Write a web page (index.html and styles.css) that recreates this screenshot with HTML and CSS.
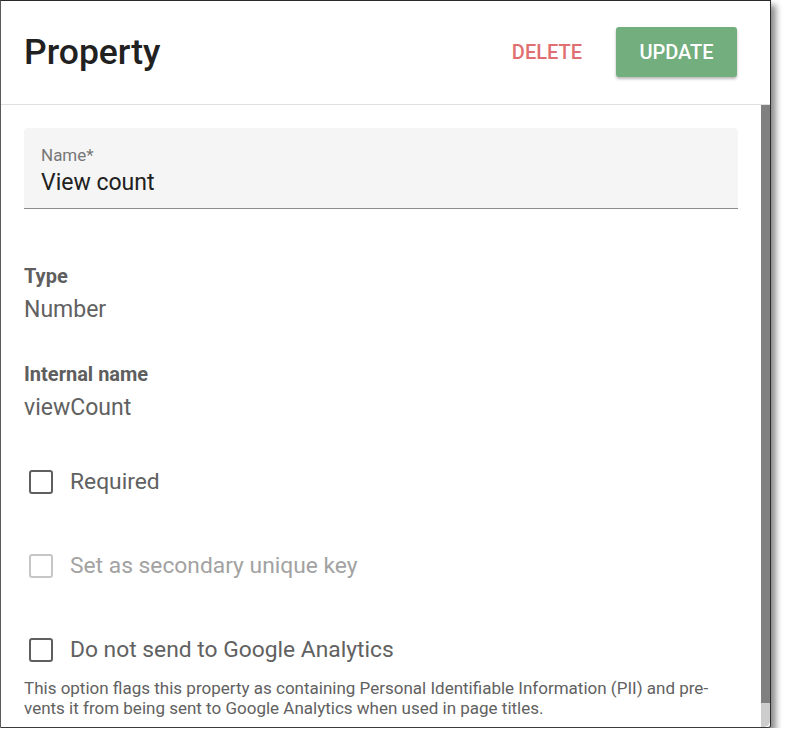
FILE: index.html
```html
<!DOCTYPE html>
<html lang="en">
<head>
<meta charset="utf-8">
<title>Property</title>
<link rel="stylesheet" href="styles.css">
</head>
<body>
<div class="dialog">
  <header class="dialog-header">
    <h1 class="dialog-title">Property</h1>
    <div class="actions">
      <button class="btn btn-text">DELETE</button>
      <button class="btn btn-raised">UPDATE</button>
    </div>
  </header>
  <div class="dialog-body">
    <div class="content">
      <div class="field">
        <div class="field-label">Name*</div>
        <div class="field-value">View count</div>
      </div>
      <div class="info">
        <div class="info-label">Type</div>
        <div class="info-value">Number</div>
      </div>
      <div class="info info-second">
        <div class="info-label">Internal name</div>
        <div class="info-value">viewCount</div>
      </div>
      <div class="options">
        <label class="check">
          <span class="check-box"></span>
          <span class="check-text">Required</span>
        </label>
        <label class="check check-disabled">
          <span class="check-box"></span>
          <span class="check-text">Set as secondary unique key</span>
        </label>
        <label class="check">
          <span class="check-box"></span>
          <span class="check-text">Do not send to Google Analytics</span>
        </label>
      </div>
      <p class="help">This option flags this property as containing Personal Identifiable Information (PII) and pre-<br>vents it from being sent to Google Analytics when used in page titles.</p>
    </div>
    <div class="scrollbar">
      <div class="scroll-thumb"></div>
      <div class="scroll-track"></div>
    </div>
  </div>
</div>
</body>
</html>
```
FILE: styles.css
```css
html, body {
  margin: 0;
  padding: 0;
  background: #ffffff;
}

body {
  font-family: Roboto, "Noto Sans", "Liberation Sans", sans-serif;
  color: #616161;
}

.dialog {
  box-sizing: border-box;
  width: 771px;
  height: 728px;
  background: #ffffff;
  border: 1px solid #2a2a2a;
  border-left-color: #5a5a5a;
  border-bottom-color: #3a3a3a;
  border-bottom-right-radius: 3px;
  box-shadow: 5px 5px 6px rgba(0, 0, 0, 0.45);
  display: flex;
  flex-direction: column;
  overflow: hidden;
}

.dialog-header {
  box-sizing: border-box;
  height: 104px;
  flex: none;
  display: flex;
  align-items: center;
  justify-content: space-between;
  padding: 0 33px 1px 23px;
  border-bottom: 1px solid #e0e0e0;
}

.dialog-title {
  margin: 0;
  font-size: 35.5px;
  font-weight: 500;
  color: #212121;
  line-height: 40px;
}

.actions {
  display: flex;
  align-items: center;
  gap: 11px;
}

.btn {
  font-family: Roboto, "Noto Sans", "Liberation Sans", sans-serif;
  font-size: 20px;
  font-weight: 500;
  height: 50px;
  padding: 0 23px;
  border: none;
  border-radius: 3px;
  background: transparent;
  cursor: pointer;
}

.btn-text {
  color: #df6f71;
}

.btn-raised {
  width: 121px;
  padding: 0;
  background: #73ae7e;
  color: #ffffff;
  box-shadow: 0 2px 3px rgba(0, 0, 0, 0.28);
}

.dialog-body {
  flex: 1;
  display: flex;
  min-height: 0;
}

.content {
  flex: 1;
  min-width: 0;
  padding: 23px 23px 0 23px;
  overflow: hidden;
}

.field {
  box-sizing: border-box;
  height: 81px;
  padding: 17px 17px 0;
  background: #f5f5f5;
  border-radius: 4px 4px 0 0;
  border-bottom: 1px solid #8c8c8c;
}

.field-label {
  font-size: 17px;
  line-height: 20px;
  color: #777777;
}

.field-value {
  margin-top: 5px;
  font-size: 23px;
  line-height: 26px;
  color: #212121;
}

.info {
  margin-top: 56px;
}

.info-second {
  margin-top: 40px;
}

.info-label {
  font-size: 20px;
  line-height: 22px;
  font-weight: 700;
  color: #5e5e5e;
}

.info-value {
  margin-top: 10px;
  font-size: 23px;
  line-height: 26px;
  color: #616161;
}

.options {
  margin-top: 37px;
  display: flex;
  flex-direction: column;
  gap: 36px;
}

.check {
  height: 48px;
  display: flex;
  align-items: center;
}

.check-box {
  box-sizing: border-box;
  width: 24px;
  height: 24px;
  margin-left: 5px;
  margin-right: 17px;
  border: 2px solid #5f5f5f;
  border-radius: 3px;
  flex: none;
}

.check-text {
  font-size: 22.8px;
  line-height: 26px;
  color: #616161;
}

.check-disabled .check-box {
  border-color: #c6c6c6;
}

.check-disabled .check-text {
  color: #a2a2a2;
}

.help {
  margin: 4px 0 0;
  font-size: 17px;
  line-height: 20px;
  color: #616161;
}

.scrollbar {
  width: 9px;
  flex: none;
  display: flex;
  flex-direction: column;
}

.scroll-thumb {
  flex: 1;
  background: #808080;
}

.scroll-track {
  height: 24px;
  background: #cdcdcd;
  border-bottom-right-radius: 6px;
}
```
